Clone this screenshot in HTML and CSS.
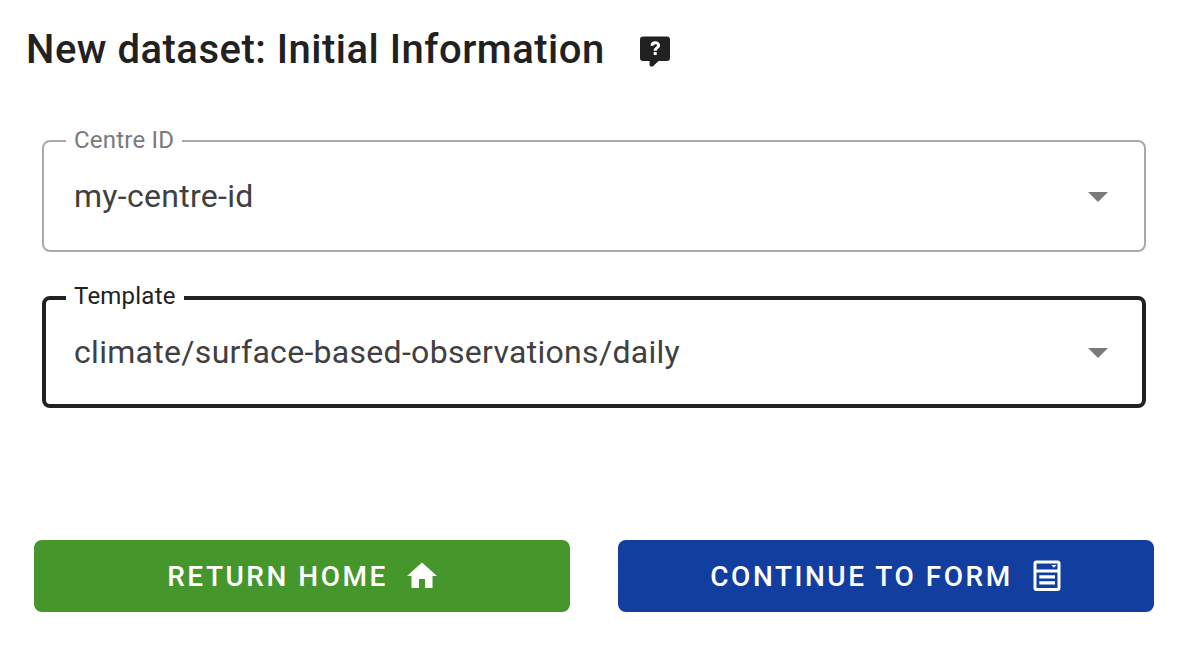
FILE: index.html
```html
<!DOCTYPE html>
<html lang="en">
<head>
<meta charset="utf-8">
<meta name="viewport" content="width=device-width, initial-scale=1">
<title>New dataset</title>
<link rel="stylesheet" href="styles.css">
</head>
<body>
<main class="card">
  <header class="card-title">
    <h1 class="title">New dataset: Initial Information</h1>
    <button type="button" class="help" aria-label="Help">
      <svg class="icon" viewBox="0 0 36 36" aria-hidden="true">
        <path fill="currentColor" d="M6 3.500h24a3 3 0 0 1 3 3v18.500a3 3 0 0 1-3 3h-8.500l-5.200 5q-.5.500-1.200.500h-1a1.500 1.500 0 0 1-1.500-1.500v-4h-6.600a3 3 0 0 1-3-3v-18.500a3 3 0 0 1 3-3z"/>
        <path fill="none" stroke="#fff" stroke-width="3" d="M15 12.800C15 8.800 21.600 8.800 21.600 12.400C21.600 14.700 18.200 14.600 18.200 17.800"/>
        <path fill="#fff" d="M16.700 19h3v3h-3z"/>
      </svg>
    </button>
  </header>
  <form class="form">
    <div class="fields">
      <fieldset class="field">
        <legend class="legend"><label for="centre">Centre ID</label></legend>
        <div class="control">
          <select id="centre" class="select"><option>my-centre-id</option></select>
          <svg class="arrow" viewBox="0 0 20 10" aria-hidden="true"><path fill="currentColor" d="M0 0h20L10 10z"/></svg>
        </div>
      </fieldset>
      <fieldset class="field field-active">
        <legend class="legend"><label for="template">Template</label></legend>
        <div class="control">
          <select id="template" class="select"><option>climate/surface-based-observations/daily</option></select>
          <svg class="arrow" viewBox="0 0 20 10" aria-hidden="true"><path fill="currentColor" d="M0 0h20L10 10z"/></svg>
        </div>
      </fieldset>
    </div>
    <div class="actions">
      <button type="button" class="btn btn-home">Return home
        <svg class="icon" viewBox="0 0 24 24" aria-hidden="true"><path fill="currentColor" d="M10 20V14H14V20H19V12H22L12 3L2 12H5V20H10Z"/></svg>
      </button>
      <button type="button" class="btn btn-form">Continue to form
        <svg class="icon" viewBox="0 0 36 36" aria-hidden="true">
          <rect x="6" y="4" width="24" height="27.500" rx="1.500" fill="none" stroke="currentColor" stroke-width="3"/>
          <path fill="currentColor" d="M6 11.500h24v3H6zM10.300 17.200h15.700v3.200H10.300zM10.300 23.300h15.700v3.200H10.300zM22.300 7h5.200L24.900 9.800z"/>
        </svg>
      </button>
    </div>
  </form>
</main>
</body>
</html>
```
FILE: styles.css
```css
* { box-sizing: border-box; }

body {
  margin: 0;
  background: #fff;
  color: #212121;
  font-family: Roboto, "Liberation Sans", sans-serif;
}

.card { padding: 18px 34px 36px; }

.card-title {
  display: flex;
  align-items: center;
  gap: 32px;
  margin-left: -8px;
}

.title {
  margin: 0;
  font-size: 40px;
  font-weight: 500;
  line-height: 64px;
  letter-spacing: 0.0125em;
}

.help {
  display: flex;
  padding: 2px 0 0;
  border: 0;
  background: none;
  color: inherit;
}

.icon {
  width: 36px;
  height: 36px;
  flex: none;
}

.fields {
  display: grid;
  gap: 34px;
  padding: 47px 8px 0;
}

.field {
  min-width: 0;
  margin: 0;
  padding: 0 36px 11px 22px;
  border: 2px solid #a9a9a9;
  border-radius: 8px;
}

.legend {
  padding: 0 8px 2px;
  color: #7a7a7a;
  font-size: 24px;
  line-height: 22px;
  letter-spacing: 0.009375em;
}

.legend label { display: block; }

.control {
  display: grid;
  align-items: center;
}

.select,
.arrow { grid-area: 1 / 1; }

.select {
  width: 100%;
  height: 86px;
  padding: 0 32px 0 8px;
  border: 0;
  outline: 0;
  appearance: none;
  background: none;
  color: #404040;
  font: 32px Roboto, "Liberation Sans", sans-serif;
  letter-spacing: 0.009375em;
}

.arrow {
  justify-self: end;
  width: 20px;
  height: 10px;
  margin-top: 2px;
  color: #7a7a7a;
  pointer-events: none;
}

.field-active {
  padding: 0 34px 10px 20px;
  border: 4px solid #212121;
}

.field-active .legend {
  padding-bottom: 4px;
  color: #212121;
  line-height: 20px;
}

.field-active .select { height: 84px; }

.actions {
  display: grid;
  grid-template-columns: 1fr 1fr;
  gap: 48px;
  margin-top: 132px;
}

.btn {
  display: flex;
  align-items: center;
  justify-content: center;
  gap: 16px;
  height: 72px;
  padding: 0 32px 0 35px;
  border: 0;
  border-radius: 8px;
  color: #fff;
  font: 500 28px Roboto, "Liberation Sans", sans-serif;
  letter-spacing: 0.09em;
  text-transform: uppercase;
}

.btn-home { background: #45962b; }
.btn-form { background: #123f9f; }
```
